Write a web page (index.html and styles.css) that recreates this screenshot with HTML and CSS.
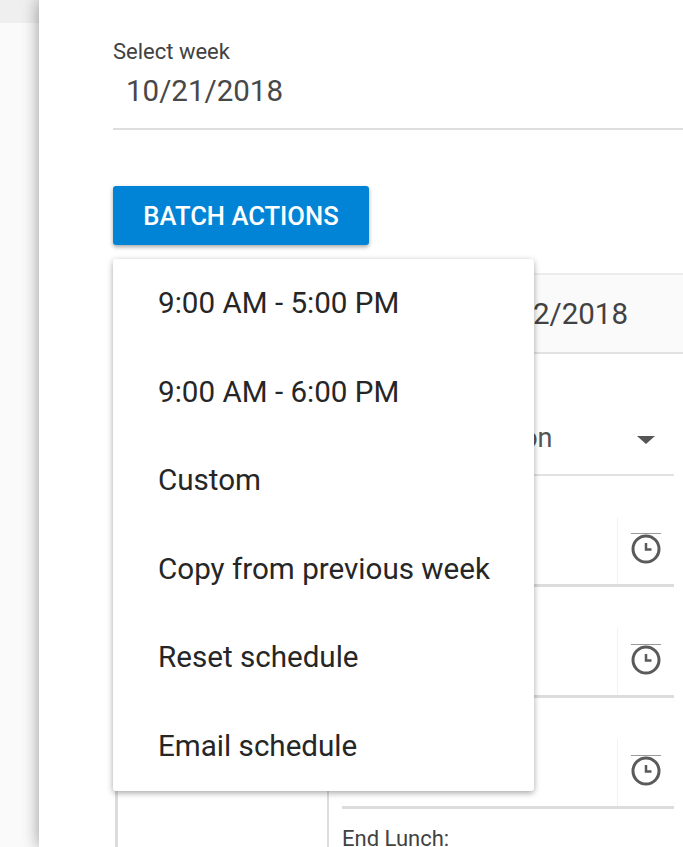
FILE: index.html
```html
<!DOCTYPE html>
<html lang="en">
<head>
  <meta charset="UTF-8">
  <title>Schedule</title>
  <meta name="viewport" content="width=device-width,initial-scale=1">
  <link rel="stylesheet" href="styles.css">
</head>
<body>
<div class="page">
  <aside class="sidebar">
    <div class="sidebar-top"></div>
  </aside>
  <main class="content">
    <div class="week">
      <div class="week-label">Select week</div>
      <div class="week-value">10/21/2018</div>
    </div>

    <div class="batch">
      <button class="batch-btn">Batch Actions</button>
      <ul class="menu">
        <li>9:00 AM - 5:00 PM</li>
        <li>9:00 AM - 6:00 PM</li>
        <li>Custom</li>
        <li>Copy from previous week</li>
        <li>Reset schedule</li>
        <li>Email schedule</li>
      </ul>
    </div>

    <section class="day">
      <div class="day-head">10/22/2018</div>
      <div class="day-body">
        <div class="day-left"></div>
        <div class="day-right">
          <div class="select">
            <span class="select-text">Select an option</span>
            <span class="select-arrow"></span>
          </div>

          <div class="time-row">
            <div class="time-label"></div>
            <div class="time-field">
              <div class="time-input"></div>
              <div class="time-icon">
                <svg viewBox="0 0 32 32" width="32" height="32"><path class="clock-top" d="M1 1.5h30"/><circle class="clock-face" cx="16" cy="17" r="13"/><path class="clock-hand" d="M16 11v6.5h5.5"/></svg>
              </div>
            </div>
          </div>
          <div class="time-row">
            <div class="time-label"></div>
            <div class="time-field">
              <div class="time-input"></div>
              <div class="time-icon">
                <svg viewBox="0 0 32 32" width="32" height="32"><path class="clock-top" d="M1 1.5h30"/><circle class="clock-face" cx="16" cy="17" r="13"/><path class="clock-hand" d="M16 11v6.5h5.5"/></svg>
              </div>
            </div>
          </div>
          <div class="time-row">
            <div class="time-label"></div>
            <div class="time-field">
              <div class="time-input"></div>
              <div class="time-icon">
                <svg viewBox="0 0 32 32" width="32" height="32"><path class="clock-top" d="M1 1.5h30"/><circle class="clock-face" cx="16" cy="17" r="13"/><path class="clock-hand" d="M16 11v6.5h5.5"/></svg>
              </div>
            </div>
          </div>
          <div class="time-row">
            <div class="time-label">End Lunch:</div>
          </div>
        </div>
      </div>
    </section>
  </main>
</div>
</body>
</html>
```

FILE: styles.css
```css
html, body {
  height: 100%;
}
body {
  margin: 0;
  font-family: Roboto, "Liberation Sans", sans-serif;
  background: #fff;
  color: #212121;
  overflow: hidden;
}
.page {
  display: flex;
  height: 847px;
  overflow: hidden;
}
.sidebar {
  flex: 0 0 39px;
  background: #fafafa;
}
.sidebar-top {
  height: 23px;
  background: #efefef;
}
.content {
  flex: 1;
  min-width: 0;
  padding: 41px 0 0 74px;
  background: #fff;
  position: relative;
  box-shadow: 0 0 16px rgba(0, 0, 0, .4);
}

.week {
  border-bottom: 2px solid #dedede;
  padding-bottom: 18px;
}
.week-label {
  font-size: 22px;
  line-height: 22px;
  color: #424242;
}
.week-value {
  margin-top: 9px;
  padding-left: 13px;
  font-size: 29.5px;
  line-height: 38px;
  color: #484848;
}

.batch {
  position: relative;
  margin-top: 56px;
}
.batch-btn {
  display: block;
  width: 256px;
  height: 59px;
  border: 0;
  border-radius: 3px;
  background: #0284d6;
  color: #fff;
  font-family: inherit;
  font-size: 25.6px;
  font-weight: 500;
  text-transform: uppercase;
  box-shadow: 0 2px 4px rgba(0, 0, 0, .35);
}
.menu {
  position: absolute;
  top: 73px;
  left: 0;
  z-index: 5;
  width: 421px;
  margin: 0;
  padding: 0;
  list-style: none;
  background: #fff;
  border-radius: 3px;
  box-shadow: 0 2px 6px rgba(0, 0, 0, .35);
}
.menu li {
  height: 88.6px;
  line-height: 88px;
  padding-left: 45px;
  font-size: 29.6px;
  color: #262626;
}

.day {
  margin-top: 28px;
}
.day-head {
  height: 77px;
  line-height: 79px;
  padding-left: 358px;
  border-top: 2px solid #ececec;
  border-bottom: 2px solid #e2e2e2;
  background: #fafafa;
  font-size: 29.5px;
  color: #424242;
}
.day-body {
  display: flex;
  padding-right: 9px;
}
.day-left {
  flex: 0 0 209px;
  margin-left: 2px;
  border-left: 3px solid #dcdcdc;
  border-right: 2px solid #dcdcdc;
}
.day-right {
  flex: 1;
  min-width: 0;
  padding-left: 13px;
}
.select {
  display: flex;
  align-items: center;
  justify-content: space-between;
  height: 70px;
  margin-top: 50px;
  padding-right: 19px;
  border-bottom: 2px solid #e2e2e2;
  font-size: 27px;
  color: #555;
}
.select-text {
  padding-left: 17px;
  margin-bottom: 2px;
}
.select-arrow {
  width: 0;
  height: 0;
  margin-top: 2px;
  border-left: 9px solid transparent;
  border-right: 9px solid transparent;
  border-top: 8px solid #555;
}
.time-row {
  padding-top: 19px;
}
.time-label {
  height: 22px;
  font-size: 22px;
  line-height: 22px;
  color: #424242;
}
.time-field {
  display: flex;
  justify-content: flex-end;
  height: 67px;
  border-bottom: 3px solid #dcdcdc;
}
.time-input {
  flex: 1;
}
.time-icon {
  flex: 0 0 57px;
  display: flex;
  align-items: flex-end;
  justify-content: center;
  padding-bottom: 20px;
  box-sizing: border-box;
  border-left: 1px solid #f2f2f2;
}
.clock-top {
  fill: none;
  stroke: #9a9a9a;
  stroke-width: 1;
}
.clock-face {
  fill: none;
  stroke: #5a5a5a;
  stroke-width: 3;
}
.clock-hand {
  fill: none;
  stroke: #5a5a5a;
  stroke-width: 2.5;
}
```
